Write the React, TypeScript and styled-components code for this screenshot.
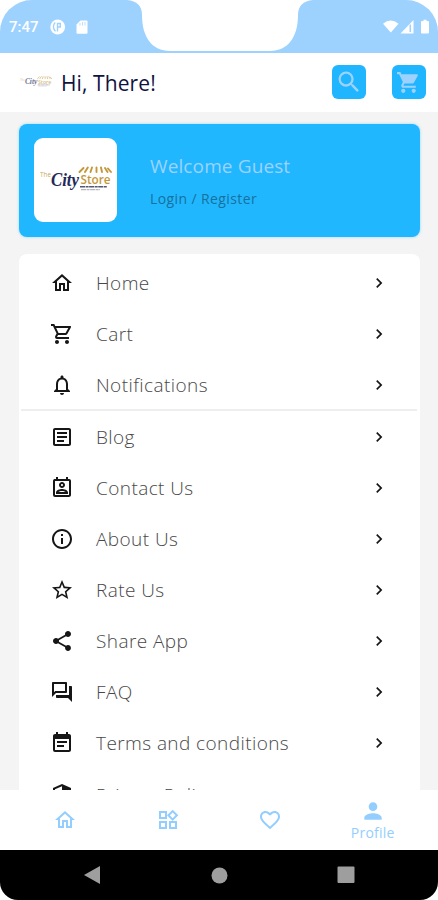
import React from 'react';
import styled, { createGlobalStyle } from 'styled-components';
import {
  MdOutlineHome, MdOutlineShoppingCart, MdShoppingCart, MdNotificationsNone, MdOutlineArticle,
  MdOutlinePermContactCalendar, MdInfoOutline, MdStarBorder, MdShare, MdOutlineForum, MdEventNote,
  MdSecurity, MdOutlineWidgets, MdFavoriteBorder, MdPerson, MdChevronRight, MdSearch,
} from 'react-icons/md';

const Global = createGlobalStyle`
  * { box-sizing: border-box; }
  body { margin: 0; background: #fff; font-family: "Open Sans", "Noto Sans", sans-serif; }
`;

const Phone = styled.div`
  width: 438px;
  height: 900px;
  display: flex;
  flex-direction: column;
  overflow: hidden;
  border-radius: 32px 32px 18px 18px;
  background: #f4f4f4;
`;

const StatusBar = styled.div`
  position: relative;
  flex: none;
  height: 53px;
  padding: 1px 8px 0 9px;
  display: flex;
  align-items: center;
  justify-content: space-between;
  background: #9dd2ff;
  color: #fff;
`;

const Notch = styled.svg`
  position: absolute;
  left: 127px;
  top: 0;
`;

const StatusGroup = styled.div`
  display: flex;
  align-items: center;
`;

const Clock = styled.span`
  width: 41px;
  font: 500 15px/18px Roboto, sans-serif;
`;

const Header = styled.header`
  flex: none;
  height: 59px;
  padding: 0 12.5px 1px 20px;
  display: flex;
  align-items: center;
  background: #fff;
`;

const HeaderLogo = styled.div`
  display: flex;
  opacity: 0.65;
`;

const Greeting = styled.h1`
  flex: 1;
  margin: 1px 0 0 9px;
  font-size: 21px;
  font-weight: 400;
  line-height: 30px;
  letter-spacing: 0.1px;
  color: #10123f;
`;

const HeaderButton = styled.button`
  width: 34px;
  height: 34px;
  margin-left: 25.5px;
  padding: 0;
  border: 0;
  border-radius: 6px;
  display: grid;
  place-items: center;
  background: #20b5ff;
  color: #9dd2ff;
`;

const Content = styled.main`
  flex: 1;
  min-height: 0;
  overflow: hidden;
  padding: 12px 18px 0 19px;
`;

const GuestCard = styled.section`
  height: 113px;
  padding: 0 15px 1px;
  display: flex;
  align-items: center;
  gap: 33px;
  border-radius: 8px;
  background: #20b7ff;
  box-shadow: 0 0 3px rgba(32, 183, 255, 0.45);
`;

const LogoTile = styled.div`
  width: 83px;
  height: 84px;
  border-radius: 9px;
  display: grid;
  place-items: center;
  background: #fff;
`;

const GuestText = styled.div`
  display: flex;
  flex-direction: column;
  gap: 9px;
`;

const Welcome = styled.div`
  font-size: 19px;
  line-height: 28px;
  letter-spacing: 0.12px;
  color: #9dd2ff;
`;

const Login = styled.div`
  font-size: 14px;
  line-height: 20px;
  letter-spacing: 0.4px;
  color: #17719d;
`;

const Menu = styled.nav`
  margin-top: 17px;
  height: 620px;
  padding-top: 3.6px;
  border-radius: 8px;
  background: #fff;
`;

const MenuRow = styled.div<{ $divided?: boolean }>`
  height: 51.15px;
  margin: 0 3px 0 2px;
  padding: 0 28px 0 29px;
  display: flex;
  align-items: center;
  color: #161616;
  box-shadow: ${p => (p.$divided ? 'inset 0 -2px #eeeeee' : 'none')};
`;

const MenuLabel = styled.span`
  flex: 1;
  margin-left: 22px;
  font-size: 19px;
  font-weight: 300;
  line-height: 26px;
  letter-spacing: 0.42px;
  color: #484848;
`;

const TabBar = styled.nav`
  flex: none;
  height: 60px;
  padding: 0 14px 1px;
  display: grid;
  grid-template-columns: repeat(4, 1fr);
  background: #fff;
`;

const Tab = styled.div`
  display: flex;
  flex-direction: column;
  align-items: center;
  justify-content: center;
  color: #94ceff;
`;

const TabLabel = styled.span`
  font-size: 14px;
  line-height: 18px;
  letter-spacing: 0.25px;
`;

const SystemBar = styled.div`
  flex: none;
  height: 50px;
  padding: 0 83px;
  display: flex;
  align-items: center;
  justify-content: space-between;
  background: #000;
`;

const StoreLogo = ({ width, height }: { width: number; height: number }) => (
  <svg width={width} height={height} viewBox="0 0 72 28" preserveAspectRatio="none">
    <text x="0" y="11" fontFamily="Open Sans, sans-serif" fontSize="6.5" fill="#c9a75c" textLength="11" lengthAdjust="spacingAndGlyphs">The</text>
    <text x="11" y="19.5" fontFamily="Liberation Serif, serif" fontSize="18" fontStyle="italic" fontWeight="700" fill="#242858" textLength="28" lengthAdjust="spacingAndGlyphs">City</text>
    <text x="40.5" y="18" fontFamily="Open Sans, sans-serif" fontSize="12.5" fontWeight="600" fill="#c3983b" textLength="30" lengthAdjust="spacingAndGlyphs">Store</text>
    <g fill="none" stroke="#c3983b" strokeWidth="1.9" strokeLinecap="round">
      <path d="M43.5 2 39.5 6M47.8 1.5 45 6M52 1.5 50.5 6M56.5 1.5V6M61 1.5 62 6M65 2 67.5 6M68 2.5 71 6" />
    </g>
    <path d="M40 20.8H67" stroke="#555873" strokeWidth="1.4" strokeDasharray="5 .6 3 .5" fill="none" />
    <path d="M41 23.7H60" stroke="#a3a4b2" strokeWidth="1" strokeDasharray="5 .6 3 .5" fill="none" />
  </svg>
);

const menuItems = [
  { label: 'Home', Icon: MdOutlineHome },
  { label: 'Cart', Icon: MdOutlineShoppingCart },
  { label: 'Notifications', Icon: MdNotificationsNone, divided: true },
  { label: 'Blog', Icon: MdOutlineArticle },
  { label: 'Contact Us', Icon: MdOutlinePermContactCalendar },
  { label: 'About Us', Icon: MdInfoOutline },
  { label: 'Rate Us', Icon: MdStarBorder },
  { label: 'Share App', Icon: MdShare },
  { label: 'FAQ', Icon: MdOutlineForum },
  { label: 'Terms and conditions', Icon: MdEventNote },
  { label: 'Privacy Policy', Icon: MdSecurity },
];

export default function App() {
  return (
    <>
      <Global />
      <Phone>
        <StatusBar>
          <Notch width="186" height="52" viewBox="0 0 186 52">
            <path d="M0 0C10 1 15 6 15 15C15 37 25 51 43 51H143C161 51 171 37 171 15C171 6 176 1 186 0Z" fill="#fff" />
          </Notch>
          <StatusGroup>
            <Clock>7:47</Clock>
            <svg width="38" height="16" viewBox="0 0 38 16">
              <circle cx="7.7" cy="8" r="7.4" fill="#fff" />
              <path d="M5.2 3.5C2.6 6 3 10 5.5 12.3M7.5 4V12.5M7.5 4.5H10.3V8H7.5" fill="none" stroke="#9dd2ff" strokeWidth="1.4" />
              <path d="M30.5 1.5H36.5Q37.5 1.5 37.5 2.5V13.8Q37.5 14.8 36.5 14.8H27.5Q26.5 14.8 26.5 13.8V5.5Z" fill="#fff" />
              <path d="M30 4V6.5M32.5 3V6.5M35 3V6.5" stroke="#9dd2ff" strokeWidth=".7" />
            </svg>
          </StatusGroup>
          <svg width="47" height="16" viewBox="0 0 47 16">
            <path d="M0 4.8Q7.5-1.8 15.5 4.8L7.8 13.6Z" fill="#fff" />
            <path d="M17.5 14.5 30.5 1V14.5Z" fill="#fff" />
            <path d="M27.3 5.5V13" stroke="#9dd2ff" strokeWidth="1.5" />
            <path d="M40.5.7H43.5V2H45Q46 2 46 3V13.5Q46 14.5 45 14.5H39Q38 14.5 38 13.5V3Q38 2 39 2H40.5Z" fill="#fff" />
          </svg>
        </StatusBar>
        <Header>
          <HeaderLogo><StoreLogo width={32} height={12} /></HeaderLogo>
          <Greeting>Hi, There!</Greeting>
          <HeaderButton aria-label="Search"><MdSearch size={28} /></HeaderButton>
          <HeaderButton aria-label="Cart"><MdShoppingCart size={25} /></HeaderButton>
        </Header>
        <Content>
          <GuestCard>
            <LogoTile><StoreLogo width={72} height={28} /></LogoTile>
            <GuestText>
              <Welcome>Welcome Guest</Welcome>
              <Login>Login / Register</Login>
            </GuestText>
          </GuestCard>
          <Menu>
            {menuItems.map(({ label, Icon, divided }) => (
              <MenuRow key={label} $divided={divided}>
                <Icon size={24} />
                <MenuLabel>{label}</MenuLabel>
                <MdChevronRight size={20} />
              </MenuRow>
            ))}
          </Menu>
        </Content>
        <TabBar>
          <Tab><MdOutlineHome size={24} /></Tab>
          <Tab><MdOutlineWidgets size={24} /></Tab>
          <Tab><MdFavoriteBorder size={24} /></Tab>
          <Tab><MdPerson size={26} /><TabLabel>Profile</TabLabel></Tab>
        </TabBar>
        <SystemBar>
          <svg width="18" height="20"><path d="M17 1V19L1 10Z" fill="#9e9e9e" /></svg>
          <svg width="17" height="17"><circle cx="8.5" cy="8.5" r="8" fill="#9e9e9e" /></svg>
          <svg width="18" height="18"><rect x=".5" y=".5" width="17" height="16.5" rx="1" fill="#9e9e9e" /></svg>
        </SystemBar>
      </Phone>
    </>
  );
}
